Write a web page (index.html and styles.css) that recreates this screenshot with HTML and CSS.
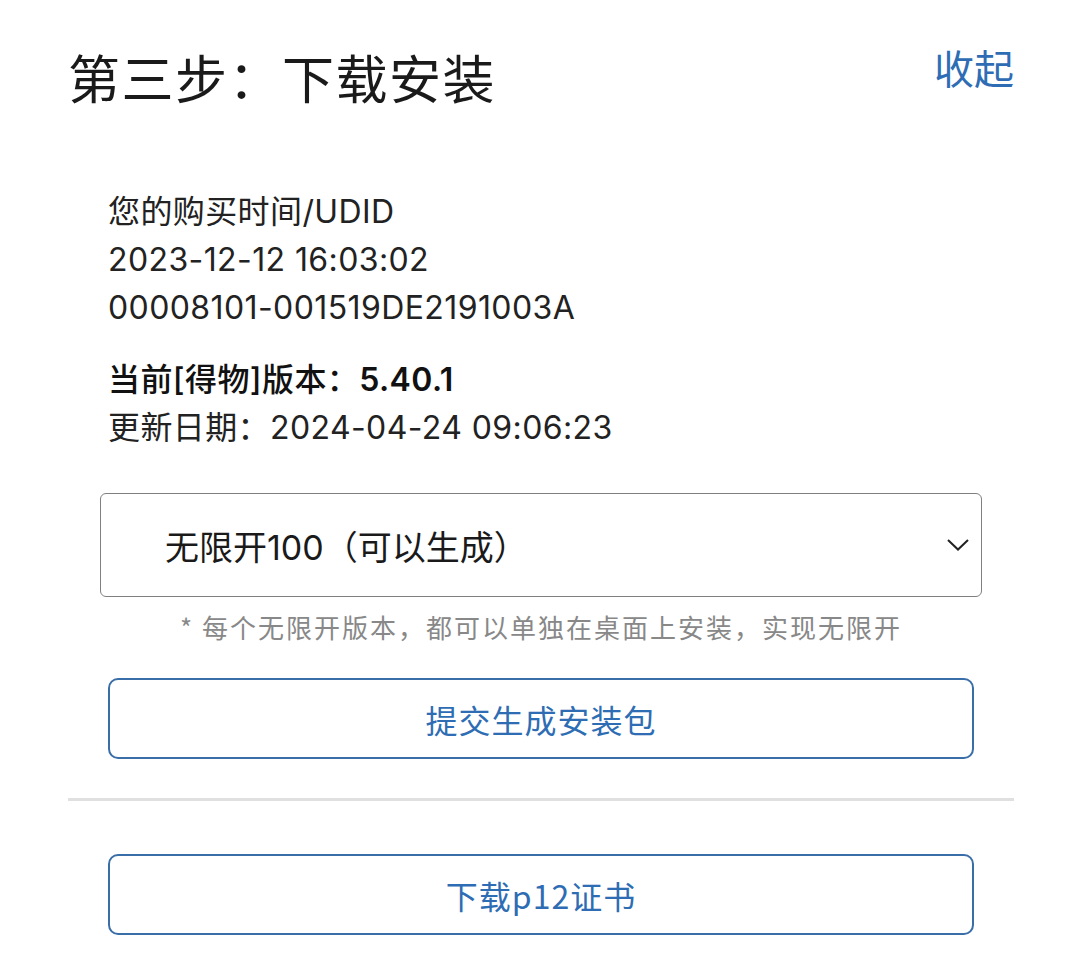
FILE: index.html
```html
<!DOCTYPE html>
<html lang="zh-CN">
<head>
    <meta charset="UTF-8">
    <meta name="viewport" content="width=device-width, initial-scale=1.0">
    <title>第三步：下载安装</title>
    <link rel="stylesheet" href="styles.css">
</head>
<body>
    <div class="page">
        <div class="head">
            <h1>第三步：下载安装</h1>
            <a href="#" class="toggle">收起</a>
        </div>

        <div class="info">
            <div class="info-block">
                <p>您的购买时间/UDID</p>
                <p>2023-12-12 16:03:02</p>
                <p>00008101-001519DE2191003A</p>
            </div>
            <div class="info-block">
                <p class="version">当前[得物]版本：<span>5.40.1</span></p>
                <p>更新日期：2024-04-24 09:06:23</p>
            </div>
        </div>

        <div class="select-box">
            <span class="select-value">无限开100（可以生成）</span>
            <svg class="chevron" width="22" height="12" viewBox="0 0 22 12">
                <path d="M1 1 L11 10.5 L21 1" fill="none" stroke="#222" stroke-width="2"/>
            </svg>
        </div>
        <p class="note">* 每个无限开版本，都可以单独在桌面上安装，实现无限开</p>

        <button class="outline-button">提交生成安装包</button>

        <div class="divider"></div>

        <button class="outline-button">下载p12证书</button>
    </div>
</body>
</html>
```

FILE: styles.css
```css
body {
    font-family: "Noto Sans CJK SC", "Noto Sans", sans-serif;
    margin: 0;
    padding: 0;
    background-color: #ffffff;
    color: #1e1e1e;
}
.page {
    padding: 40px 66px 20px 68px;
}
.head {
    display: flex;
    justify-content: space-between;
    align-items: flex-start;
}
.head h1 {
    margin: 0;
    font-size: 52px;
    line-height: 74px;
    font-weight: 400;
    letter-spacing: 1.5px;
    color: #1a1a1a;
}
.toggle {
    font-size: 40px;
    line-height: 54px;
    color: #2e6db4;
    text-decoration: none;
}
.info {
    margin-top: 74px;
    padding-left: 40px;
}
.info-block + .info-block {
    margin-top: 24px;
}
.info p {
    margin: 0;
    font-family: Inter, "Noto Sans CJK SC", sans-serif;
    font-size: 32px;
    line-height: 48px;
    letter-spacing: 0.4px;
    color: #222;
}
.info .version {
    font-weight: 500;
    color: #111;
}
.version span {
    font-weight: 600;
}
.select-box {
    margin: 41px 32px 0 32px;
    height: 104px;
    box-sizing: border-box;
    border: 1.5px solid #808080;
    border-radius: 6px;
    display: flex;
    align-items: center;
    justify-content: space-between;
    padding: 0 12px 0 64px;
}
.select-value {
    font-family: Inter, "Noto Sans CJK SC", sans-serif;
    font-size: 34px;
    color: #1a1a1a;
}
.note {
    margin: 10px 0 0 0;
    text-align: center;
    font-size: 26px;
    line-height: 40px;
    letter-spacing: 2px;
    color: #888;
}
.outline-button {
    display: block;
    box-sizing: border-box;
    width: calc(100% - 80px);
    margin: 31px 40px 0 40px;
    height: 81px;
    background: #fff;
    border: 2px solid #3a6ea8;
    border-radius: 10px;
    font-family: inherit;
    font-size: 32px;
    letter-spacing: 1px;
    color: #2e6db4;
    cursor: pointer;
}
.divider {
    margin-top: 39px;
    height: 3px;
    background-color: #e0e0e0;
}
.divider + .outline-button {
    margin-top: 53px;
}
```
